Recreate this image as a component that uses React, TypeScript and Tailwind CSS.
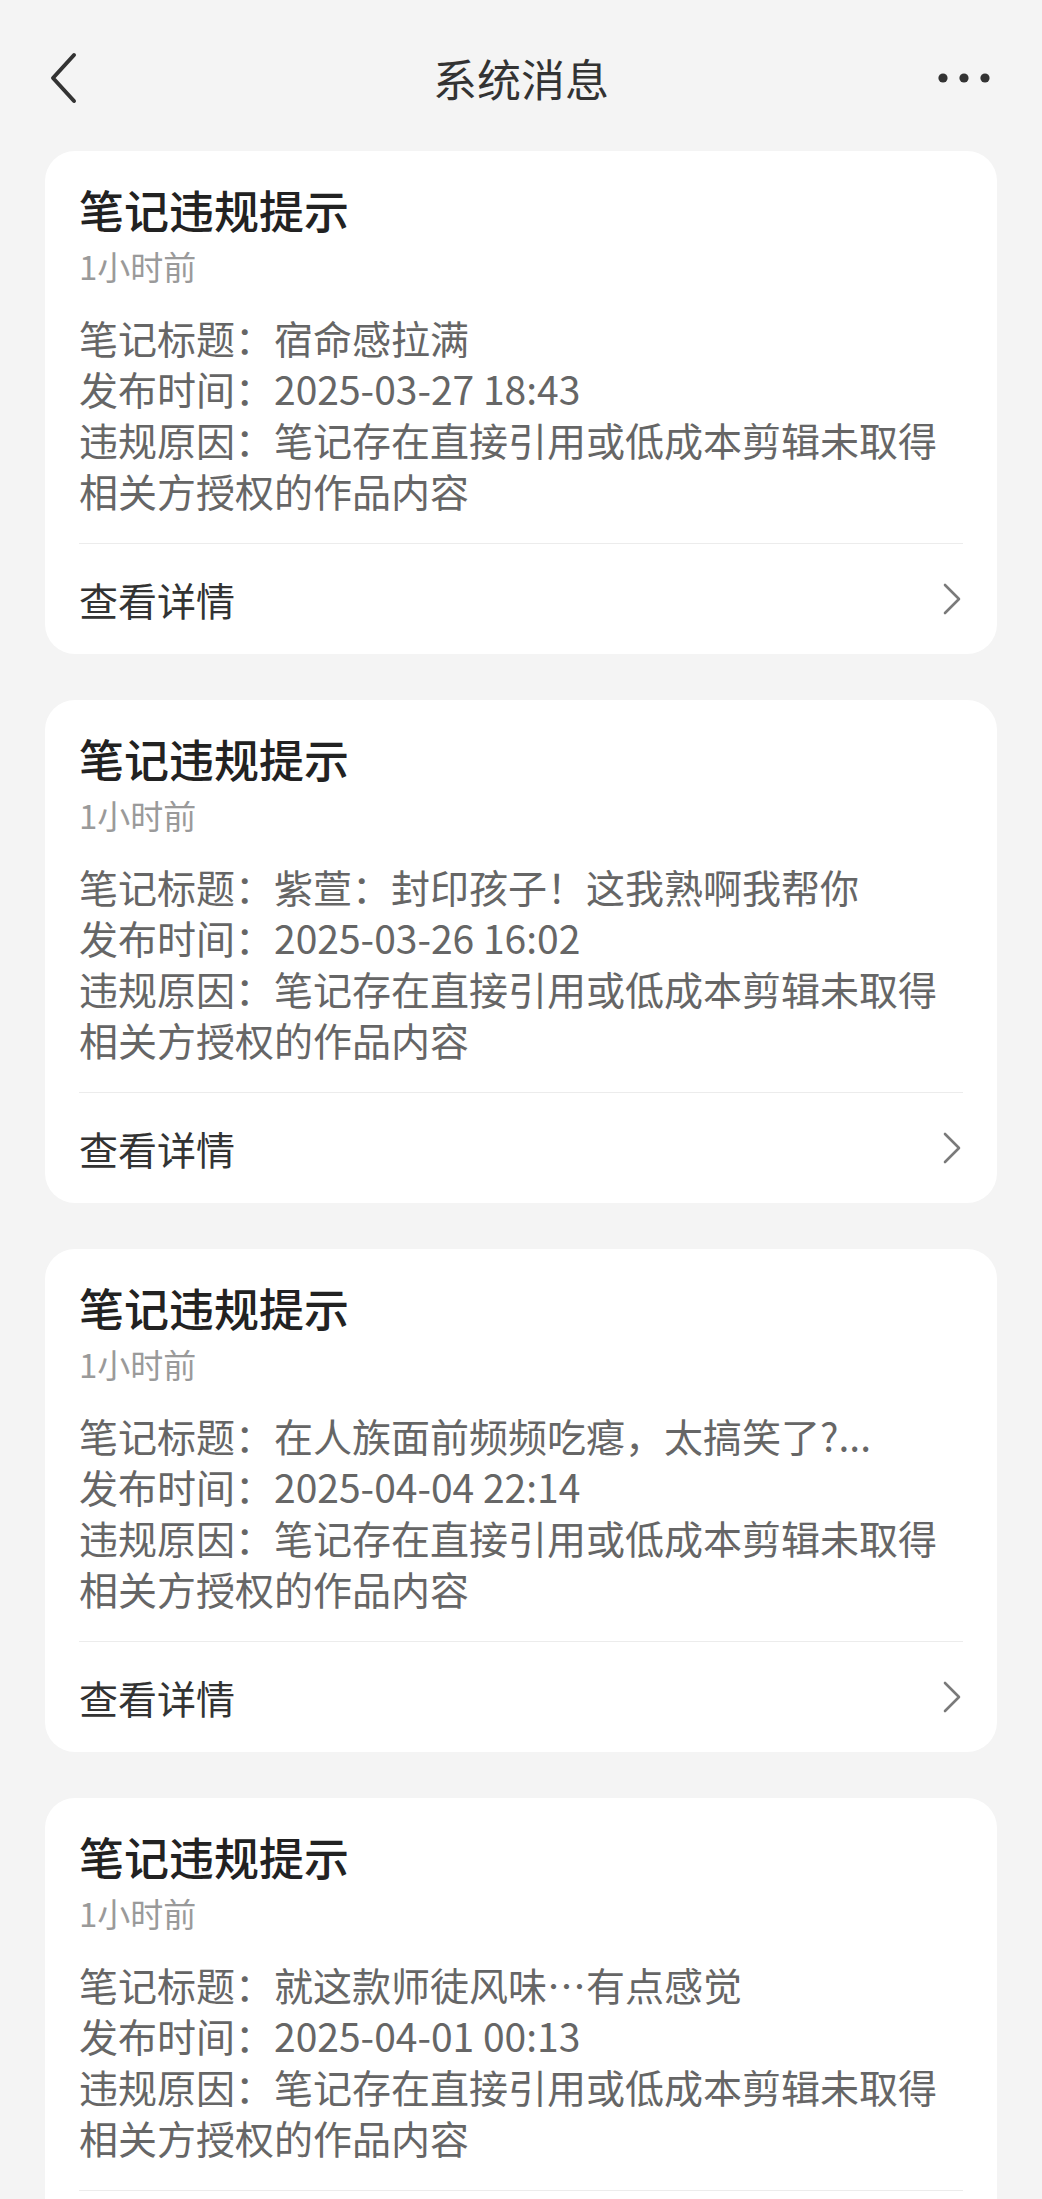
import React from "react";

const cards = [
  { title: "宿命感拉满", time: "2025-03-27 18:43" },
  { title: "紫萱：封印孩子！这我熟啊我帮你", time: "2025-03-26 16:02" },
  { title: "在人族面前频频吃瘪，太搞笑了?...", time: "2025-04-04 22:14" },
  { title: "就这款师徒风味…有点感觉", time: "2025-04-01 00:13" },
];

function Card({ title, time }: { title: string; time: string }) {
  return (
    <div className="rounded-[30px] bg-white px-[34px] pt-[29px]">
      <div className="h-[60px] text-[45px] leading-[60px] font-medium text-[#222222]">笔记违规提示</div>
      <div className="h-[52px] text-[33px] leading-[52px] text-[#9a9a9a]">1小时前</div>
      <div className="mt-[20px] text-[39px] leading-[51px] text-[#666666]">
        <div>笔记标题：{title}</div>
        <div>发布时间：{time}</div>
        <div>违规原因：笔记存在直接引用或低成本剪辑未取得相关方授权的作品内容</div>
      </div>
      <div className="mt-[27px] h-px bg-[#ececec]" />
      <div className="flex h-[110px] items-center justify-between">
        <span className="text-[39px] leading-[51px] text-[#333333]">查看详情</span>
        <svg width="22" height="32" viewBox="0 0 22 32" fill="none" className="mr-[0px]">
          <path d="M4 2 L18 16 L4 30" stroke="#7a7a7a" strokeWidth="2.6" strokeLinecap="round" strokeLinejoin="round" />
        </svg>
      </div>
    </div>
  );
}

export default function App() {
  return (
    <div
      className="h-[2199px] w-full overflow-hidden bg-[#f4f4f4]"
      style={{ fontFamily: '"Noto Sans CJK SC", "Noto Sans", sans-serif' }}
    >
      <div className="flex h-[112px] mt-[22px] items-center justify-between px-[50px]">
        <div className="flex w-[60px] items-center">
          <svg width="28" height="52" viewBox="0 0 28 52" fill="none">
            <path d="M24 3 L3 26 L24 49" stroke="#333333" strokeWidth="4" strokeLinecap="round" strokeLinejoin="round" />
          </svg>
        </div>
        <div className="text-[44px] leading-[60px] text-[#333333]">系统消息</div>
        <div className="flex w-[60px] items-center justify-end">
          <svg width="56" height="12" viewBox="0 0 56 12" fill="#333333">
            <circle cx="7" cy="6" r="4.6" />
            <circle cx="28" cy="6" r="4.6" />
            <circle cx="49" cy="6" r="4.6" />
          </svg>
        </div>
      </div>
      <div className="mt-[17px] flex flex-col gap-[46px] px-[45px]">
        {cards.map((c, i) => (
          <Card key={i} title={c.title} time={c.time} />
        ))}
      </div>
    </div>
  );
}
